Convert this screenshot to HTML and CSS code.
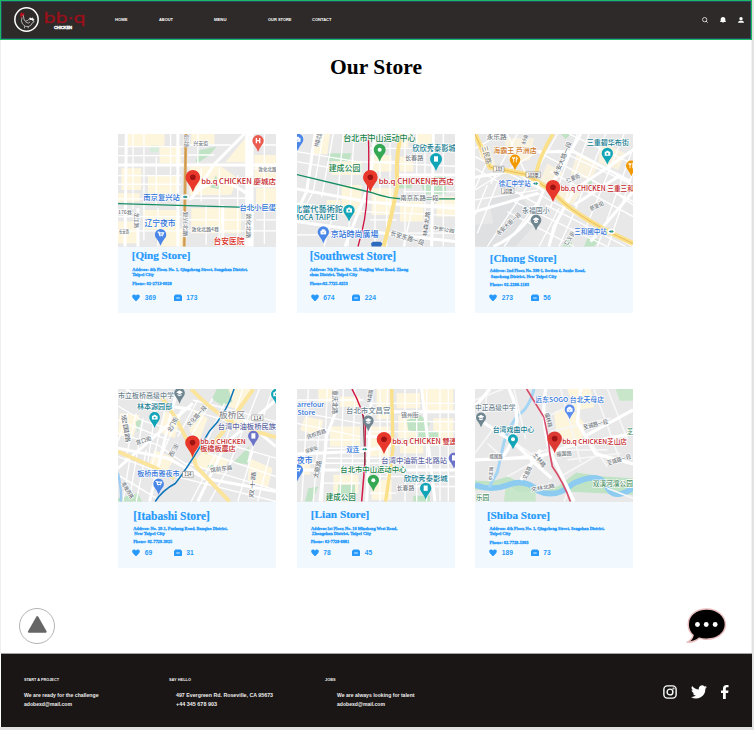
FILE: index.html
```html
<!DOCTYPE html>
<html lang="en">
<head>
<meta charset="utf-8">
<title>bb.q Chicken - Our Store</title>
<link rel="stylesheet" href="styles.css">
</head>
<body>
<div class="page">
  <header class="topbar">
    <div class="logo">
      <svg class="logo-mark" viewBox="0 0 74 74">
        <circle cx="37" cy="37" r="34.5" fill="#2e2a29" stroke="#fff" stroke-width="4.5"/>
        <path d="M17 23l5-8 3 4 5-2 1 5-5 5-4 1 2 5-4-1-1-6z" fill="#b5101d"/>
        <path d="M27 24c3 8 1 14 6 18l8-2 7-8 4 5 6-2-2 6 4 2-6 4-3 6-8 5-10-1-8-7-3-9 2-10M31 57v6M42 57v6M34 44l8 4 6-4" fill="none" stroke="#ddd" stroke-width="2.2"/>
        <path d="M47 31l4 3 4-4 1 6 5 1-5 4-5-3-5 1z" fill="#fff"/>
      </svg>
      <div class="logo-text">
        <svg class="logo-word" viewBox="0 0 41 18"><text x="-.5" y="15.7" textLength="42" lengthAdjust="spacingAndGlyphs">bb·q</text></svg>
        <span class="logo-sub"><span data-w="18">CHICKEN</span></span>
      </div>
    </div>
    <nav class="nav">
      <a><span data-w="12.5">HOME</span></a><a><span data-w="14">ABOUT</span></a><a><span data-w="12.5">MENU</span></a><a><span data-w="23.5">OUR STORE</span></a><a><span data-w="19.5">CONTACT</span></a>
    </nav>
    <div class="tools">
      <svg viewBox="0 0 18 18"><circle cx="8" cy="8" r="6.5" fill="none" stroke="#eee" stroke-width="2.4"/><path d="M12 12l5 5" stroke="#eee" stroke-width="2.6"/></svg>
      <svg viewBox="0 0 18 18"><path d="M9 0c5 0 7 3 7 7v5l2 2v1H0v-1l2-2V7c0-4 2-7 7-7zM6 16h6l-3 2z" fill="#fff"/></svg>
      <svg viewBox="0 0 18 18"><circle cx="9" cy="5" r="5" fill="#fff"/><path d="M0 17c0-5 4-6 9-6s9 1 9 6z" fill="#fff"/></svg>
    </div>
  </header>
  <main>
    <h1><span data-w="92">Our Store</span></h1>
    <section class="stores" id="stores"></section>
    <div class="actions">
      <svg class="up" viewBox="0 0 36 36"><circle cx="18" cy="18" r="17.5" fill="#fff" stroke="#aaa" stroke-width=".9"/><path d="M18.3 9l8.4 14.7H9.9z" fill="#666" stroke="#666" stroke-width="2" stroke-linejoin="round"/></svg>
      <svg class="chat" viewBox="0 0 42 37"><path d="M21.300 1C10.500 1 2.200 7.500 2.200 17c0 5 2 8.500 5 11C6.500 31 4.500 33.500 1.500 35c5 .5 9-1.500 12-4 2.300.7 5 1 7.800 1C32 32 40.400 26 40.400 17S32 1 21.300 1z" fill="#000" stroke="#e9bcbc" stroke-width="1.500"/><g fill="#fff"><circle cx="11.700" cy="17" r="2.500"/><circle cx="20.700" cy="17" r="2.500"/><circle cx="29.900" cy="17" r="2.500"/></g></svg>
    </div>
  </main>
  <footer class="footer">
    <div class="col start">
      <h2><span data-w="35">START A PROJECT</span></h2>
      <p><span data-w="74.500">We are ready for the challenge</span></p><p><span data-w="48">adobexd@mail.com</span></p>
    </div>
    <div class="col hello">
      <h2><span data-w="22">SAY HELLO</span></h2>
      <p><span data-w="97">497 Evergreen Rd. Roseville, CA 95673</span></p><p><span data-w="41">+44 345 678 903</span></p>
    </div>
    <div class="col jobs">
      <h2><span data-w="10.500">JOBS</span></h2>
      <p><span data-w="77.500">We are always looking for talent</span></p><p><span data-w="48">adobexd@mail.com</span></p>
    </div>
    <div class="social">
      <svg class="ig" viewBox="0 0 24 24" fill="none" stroke="#fff" stroke-width="2.400"><rect x="1.500" y="1.500" width="21" height="21" rx="6"/><circle cx="12" cy="12" r="5"/><circle cx="18" cy="6" r=".6"/></svg>
      <svg class="tw" viewBox="0 0 24 20" fill="#fff"><path d="M24 2.400a10 10 0 0 1-2.800.8A5 5 0 0 0 23.300.500a10 10 0 0 1-3.100 1.200A4.900 4.900 0 0 0 11.800 6.200 14 14 0 0 1 1.700 1a4.900 4.900 0 0 0 1.500 6.600 5 5 0 0 1-2.200-.6c0 2.400 1.600 4.400 3.900 4.900a5 5 0 0 1-2.200.1 4.900 4.900 0 0 0 4.600 3.400A9.900 9.900 0 0 1 0 17.500 14 14 0 0 0 21.500 5z"/></svg>
      <svg class="fb" viewBox="0 0 8 14" fill="#fff"><path d="M2 14V8H0V5.400h2V3.500C2 1.200 3.300 0 5.500 0H7.500v2.300H6.200C5 2.300 4.800 2.900 4.800 3.700v1.700h2.700L7.100 8H4.800v6z"/></svg>
    </div>
  </footer>
</div>
<script src="stores.js"></script>
</body>
</html>
```
FILE: styles.css
```css
* { box-sizing: border-box; margin: 0; padding: 0; }
body { width: 754px; height: 730px; overflow: hidden; background: #e3e2e3; font-family: "Liberation Sans", "Noto Sans CJK TC", sans-serif; }
svg { display: block; }
.page { width: 752px; height: 727px; background: #fff; display: flex; flex-direction: column; border-right: 1px solid #f2f2f2; }
[data-w] { display: inline-block; white-space: nowrap; }

.topbar { width: 752px; height: 40px; flex: none; background: #2e2a29; border: 1px solid #1bb865; box-shadow: inset 0 0 0 1px #274660; display: flex; align-items: center; padding: 0 7px 0 13px; }
.logo { display: flex; width: 101px; height: 26px; }
.logo-mark { width: 25px; height: 25px; }
.logo-text { margin-left: 5px; height: 26px; }
.logo-word { width: 41px; height: 18px; overflow: visible; }
.logo-word text { font: 14px "DejaVu Sans", sans-serif; fill: #97101b; stroke: #97101b; stroke-width: .4px; }
.logo-sub { display: block; margin: -1px 0 0 10px; color: #fff; font: bold 5px/6px "Liberation Sans", sans-serif; -webkit-text-stroke: .3px #fff; }
.nav { display: grid; grid-template-columns: 44px 55px 54px 44px 60px; font-size: 4.2px; line-height: 8px; font-weight: bold; color: #fff; }
.tools { margin-left: auto; display: flex; gap: 12px; }
.tools svg { width: 6px; height: 6px; }

main { flex: 1; border-left: 1px solid #efefef; }
h1 { height: 94px; padding: 11px 0 0 329px; font: bold 22px/32px "Liberation Serif", serif; color: #000; }
.stores { display: grid; grid-template-columns: repeat(3, 158px); column-gap: 20.500px; row-gap: 76px; padding-left: 117.200px; }
.card { height: 179px; background: #f1f9ff; color: #2699fb; }
.map { width: 158px; height: 112.500px; }
.map text { font-family: "Noto Sans CJK SC", sans-serif; font-weight: 500; paint-order: stroke; stroke: #fff; stroke-width: 4px; stroke-linejoin: round; }
.info { height: 66px; display: flex; flex-direction: column; padding-left: 14px; }
.name { font: bold 12px/14px "Liberation Serif", serif; height: 14px; -webkit-text-stroke: .2px #2699fb; }
.addr, .phone { font: bold 4.400px/5px "Liberation Serif", serif; height: 5px; -webkit-text-stroke: .3px #2699fb; }
.stats { margin-top: auto; height: 8px; margin-bottom: 11px; display: grid; grid-template-columns: 12.500px 29px 12.500px auto; align-items: center; font: bold 6.500px/8px "Liberation Sans", sans-serif; }
.stats svg { width: 8px; height: 7.500px; }

.actions { display: flex; justify-content: space-between; padding: 40px 24px 0 18px; }
.up { width: 36px; height: 36px; }
.chat { width: 41px; height: 36px; }

.footer { width: 751px; height: 74px; margin-left: 1px; flex: none; background: #1a1615; border-top: 1px solid #a5a3a3; display: flex; padding: 22px 23px 0; color: #eee; font-weight: bold; }
.footer h2 { font-size: 4.200px; line-height: 8px; height: 15px; }
.footer p { font-size: 5.400px; line-height: 9.300px; height: 9.300px; }
.start { width: 145px; }
.hello { width: 156px; }
.hello p { padding-left: 7px; }
.jobs { width: 180px; }
.jobs p { padding-left: 12px; }
.social { margin-left: auto; padding-top: 9px; display: flex; }
.ig { width: 14px; height: 14px; }
.tw { width: 16px; height: 14px; margin-left: 14px; }
.fb { width: 8px; height: 14px; margin-left: 14px; }
```
FILE: stores.js
```js
const W = '#fff', Y = '#fbe08a', CREAM = '#fdf5dc', PARK = '#bfe3c4', RED = '#c5221f';
const BLUE = '#2f72d8', TEAL = '#12a5b8', GREEN = '#34a853', SLATE = '#6f8590', GRAY = '#757b82';

const line = (d, w = 6, c = W) => `<path d="${d}" fill="none" stroke="${c}" stroke-width="${w}"/>`;
const area = (d, c = CREAM) => `<path d="${d}z" fill="${c}"/>`;
const label = (s, x, y, len, c = GRAY, size = 18, rot = 0) =>
  `<text x="${x}" y="${y}" font-size="${size}" textLength="${len}" lengthAdjust="spacingAndGlyphs" fill="${c}"${rot ? ` transform="rotate(${rot} ${x} ${y})"` : ''}>${s}</text>`;
const glyphs = {
  dot: '<circle r="6" fill="#fff"/>',
  cart: '<path d="M-9-7h4l2 9h9l3-7h-13M-2 6h1M6 6h1" fill="none" stroke="#fff" stroke-width="3.5"/>',
  cam: '<path d="M-8-5h4l2-3h5l2 3h4V7H-8z" fill="#fff"/><circle r="3" cy="1" fill="#12a5b8"/>',
  fork: '<path d="M-4-8v16M4-8v16M-7-8v5h6v-5M4-8c5 3 4 8 0 8" fill="none" stroke="#fff" stroke-width="2.500"/>',
  cap: '<path d="M-10-2l10-6 10 6L0 4zM-6 3v4c4 3 8 3 12 0V3L0 6z" fill="#fff"/>',
  box: '<path d="M-6-8H6V8H-6z" fill="#fff"/>',
  bag: '<path d="M-8-3H8V7H-8zM-4-3v-4h8v4" fill="#fff" stroke="#fff"/><path d="M-3 1q3 4 6 0" fill="none" stroke="#5b8def" stroke-width="2"/>',
  H: '<path d="M-5-8V8M5-8V8M-5 0H5" stroke="#fff" stroke-width="4"/>',
  main: '<circle r="8.500" fill="#a01313"/>'
};
const pin = (x, y, r, c, g) =>
  `<path d="M${x} ${y + r * 2}Q${x - r * .2} ${y + r * 1.4} ${x - r * .75} ${y + r * .68}A${r} ${r} 0 1 1 ${x + r * .75} ${y + r * .68}Q${x + r * .2} ${y + r * 1.4} ${x} ${y + r * 2}z" fill="${c}"/><g transform="translate(${x} ${y})">${glyphs[g]}</g>`;
const home = (x, y) => pin(x, y, 22, '#e8382c', 'main');
const station = (x, y) => `<ellipse cx="${x}" cy="${y}" rx="12" ry="8" fill="#fff"/><path d="M${x - 8} ${y}l7-4v8zM${x + 8} ${y}l-7-4v8z" fill="#1b7fb5"/><circle cx="${x + 2}" cy="${y}" r="3" fill="#34a853"/>`;
const tag = (s, x, y, w) => `<path d="M${x} ${y}h${w}v17h-${w}z" fill="#fff" stroke="#777" stroke-width="1.500"/><text x="${x + 5}" y="${y + 14}" font-size="14" textLength="${w - 10}" lengthAdjust="spacingAndGlyphs" fill="#555" style="stroke:none">${s}</text>`;

/* Map drawings share one coordinate space: three units to a pixel. */
const maps = [
  { box: '25 27 475 338', art:
    area('M55 27h110v38H55zM150 65h65v50H150zM35 130h60v65H35zM115 150h90v60H115zM245 27h70v30h-70zM390 60l28-33v85h-70zM240 125h95l50 35-20 50H240zM25 205h65v25H25zM100 255h110v60H100zM245 250h150v75H245zM25 290h60v65H25zM435 90h65v95h-65zM440 190h60v55h-60zM150 310h70v55h-70z') +
    area('M258 110l12-35 50-10-20 25-32 22zM302 188l18-38 10 42z', PARK) + area('M122 62h25v20h-25z', '#d5edda') +
    line('M25 65h200M25 92h200M25 152h190M25 178h190M70 27v225M103 27v320M140 95v150M183 27v190M25 222h190M25 275h190M25 318h475M235 285h180M265 27v90M235 60h130M235 90h80M275 130v100M330 130v230M235 220h190M290 240v120M385 150v210M435 60h65M435 130h65M435 185h65M465 27v330M145 250v115M440 285h60', 4) +
    line('M25 120h475M50 27l-4 338M205 27v338M405 27l-90 90-70 105M240 225q80-100 180-12M340 240v125M85 250v115', 9) +
    line('M420 27v338', 25) + line('M229 27l-5 338', 9, '#dfad62') + line('M229 27l-5 338', 2, '#bd8942') +
    line('M25 236l475 14', 4, '#168d62') +
    label('复兴北路', 227, 30, 36, GRAY, 15, 90) + label('兴安街', 251, 60, 45, GRAY, 14) + label('敦化北路', 447, 137, 55, GRAY, 15) +
    label('176巷', 25, 268, 42, GRAY, 14) + label('龙江路', 76, 262, 48, GRAY, 15, 90) + label('复兴北路', 224, 260, 75, GRAY, 15, 90) + label('敦化北路', 414, 265, 75, GRAY, 15, 90) + label('敦化北路4巷', 246, 318, 82, GRAY, 15) + label('长安路', 28, 325, 30, GRAY, 13) +
    label('南京复兴站', 101, 225, 110, BLUE, 22) + station(227, 216) + label('辽宁夜市', 105, 304, 93, BLUE, 23) + label('台北小巨蛋', 390, 256, 109, BLUE, 22) + label('台安医院', 312, 357, 93, '#d93025', 24) +
    pin(153, 329, 17, '#4a86e8', 'cart') + pin(446, 47, 17, '#ea5b50', 'H') + home(250, 157) + label('bb.q CHICKEN 慶城店', 275, 176, 225, RED, 21) },
  { box: '21 27 474 338', art:
    area('M75 27h45l-8 60H62zM125 110h90v40h-90zM155 180h60v90h-60zM240 90h65v50h-65zM245 190h65v80h-65zM330 95h40v45h-40zM330 230h70v60h-70zM380 27h45v40h-45zM440 215h55v60h-55zM110 225h42v30h-42zM325 27h30v40h-30z') +
    area('M115 85h70l-8 23h-65zM385 160h70v48h-50zM320 175h45v15h-45zM430 150h38v56h-30z', PARK) +
    line('M21 80l180 30 294 14M21 110l190 35M100 27L70 200l-49 90M130 27l-35 190M160 27l-18 200-40 138M192 27l-18 338M21 235l200 25 274 12M240 70h255M240 110h80M270 27v180M300 27v220M345 27v338M380 27v120M405 60v230M460 27v338M330 175h165M340 200h155M330 240h165M240 285h80M255 210v155M290 210v155M21 330h200M370 240l-30 125M220 325h275', 4) +
    line('M75 27L50 200l-29 60M255 27l-12 120M21 192l220 40 254 18M430 27l-5 338M21 290q200 30 474 60M315 150h180M245 160l-80 205', 9) +
    line('M333 27q-18 80-10 150-16 90-42 188', 12, Y) + line('M21 149l220 53q60 22 110 20h144', 4, '#168d62') + line('M235 27q4 120-4 180-1 70-27 158', 4, '#cf123f') +
    label('林森北路', 85, 67, 45, GRAY, 18, -75) + label('长春路', 345, 106, 55, GRAY, 17) + label('南京东路一段', 331, 226, 115, GRAY, 17) + label('长安东路一段', 300, 330, 105, GRAY, 20, 18) + label('林森北路', 410, 335, 75, GRAY, 17, -82) + label('中安公园', 428, 313, 65, GRAY, 14, 10) +
    label('台北市中山运动中心', 160, 48, 217, '#188348', 23) + label('建成公园', 116, 137, 95, '#188348', 24) + label('欣欣秀泰影城', 367, 77, 130, '#147d91', 24) + label('北當代藝術館', 12, 261, 147, '#147d91', 24) + label('MoCA TAIPEI', 9, 284, 134, '#147d91', 22) + label('京站時尚廣場', 122, 336, 143, BLUE, 25) +
    pin(269, 74, 18, GREEN, 'dot') + pin(438, 102, 18, TEAL, 'box') + pin(177, 256, 17, TEAL, 'cam') + pin(100, 321, 17, '#4a86e8', 'bag') + pin(23, 43, 17, '#4a86e8', 'bag') + area('M243 356l6-5 22 0 6 5-4 9h-28', '#2d69bd') +
    home(241, 157) + label('bb.q CHICKEN南西店', 266, 177, 226, RED, 21) },
  { box: '23 27 474 338', art:
    area('M30 55l35 10 20 55-45-18zM110 40h90l-12 65-60 10zM240 115l50 30-40 40-30-20zM330 80l65 40-25 45-60-18zM400 50l75 35-22 50-60-22zM270 180l70 25-25 35-60-28z', '#f9f2df') +
    area('M23 300l60-5 30 70H23zM65 225l80-30 70 90-70 80H90z', '#dfe0e2') + area('M360 340l35 5-15 20h-30zM290 350l20-10 5 25h-28zM280 27h30l-15 15zM358 170l18-12-5 25z', PARK) +
    line('M23 95l190 95M23 70l80-43M23 195l180-110M60 180l-37 90M90 175l-60 150M23 225l190-30M120 27l70 150M150 27l-80 150M270 27l-80 140M330 27l-80 220M210 80l287 150M270 75l227 105M305 27l192 90M365 27L245 365M415 27L305 300M470 27L345 335M497 70L390 365M497 140l-75 225M140 230l280 135M210 205l287 160M120 260l200 105M180 185L60 365M220 220L110 365M275 250l-60 115M23 130l190 110M250 140l247 135M235 240l240 125M330 240l-55 125M440 200l57 40M60 110l-37 80', 4) +
    line('M23 157l120-20 85 60q-40 120-150 168M340 27l-80 140M497 75l-177 120-60 110-15 60M210 80h110l170 90M320 240l140-90M23 260l190-55M497 200L370 350', 9) +
    line('M23 27l45 100 110 22 77 50q55 70 242 157', 15, Y) + line('M23 27l45 100 110 22 77 50q55 70 242 157', 1.5, '#d59a2e') + line('M257 27q-35 55-52 120', 11, Y) +
    label('三民路', 43, 65, 55, '#8f8a73', 22, 75) + label('永乐路', 58, 41, 60, GRAY, 17) + label('永安大路一段', 270, 155, 110, GRAY, 18, -67) + label('仁爱街', 300, 174, 43, GRAY, 17, -23) + label('永安大街一段', 94, 333, 92, GRAY, 18, -42) + label('慈爱街', 370, 258, 45, GRAY, 17, -24) + label('仁义街', 300, 363, 45, GRAY, 18, -58) + label('永乐路', 172, 60, 30, GRAY, 15, -70) +
    tag('103', 79, 124, 31) + tag('103甲', 176, 141, 43) + tag('103甲', 103, 189, 37) +
    label('海霸王 芦洲店', 78, 84, 130, '#ce7625', 22) + label('三重碧华布街', 358, 61, 127, '#147d91', 22) + label('徐汇中学站', 94, 184, 96, BLUE, 21) + station(205, 176) + label('永福国小', 164, 263, 83, SLATE, 22) + label('三和國中站', 321, 326, 97, BLUE, 21) + station(432, 320) +
    pin(143, 104, 16, '#f29900', 'fork') + pin(420, 85, 17, TEAL, 'cam') + pin(492, 122, 16, '#f29900', 'fork') + pin(206, 285, 16, SLATE, 'cap') + home(257, 187) + label('bb.q CHICKEN 三重三和店', 280, 199, 240, RED, 21) },
  { box: '25 27 475 338', art:
    area('M30 100l60 5-20 70-45-10zM165 95l50 10-20 70-50-20zM255 90l40 25-25 65-30-25zM335 27h90l-30 65-60-20zM280 210l80 30-30 45-80-30zM420 235l70 30-15 60-60-20zM135 210l60 25-25 45-55-20zM360 120h60v30h-60z') +
    area('M322 27h35l12 38-30 12-32-20zM372 248l48-50-5 55zM25 355l60-15 12 25H25zM295 255h30v10h-30zM78 125l20-8-15 40z', PARK) +
    line('M25 78l75 45 110 32M25 160l120 35 180 125M55 100l-30 85M80 100L45 250M100 115l-40 240M140 75l-25 170M170 75l-45 190M25 120l150 60M220 80l-70 160M265 60l-60 110M25 230l160 60M60 240l-20 125M110 210l-30 155M250 60l250 65M245 90l255 80M310 55l-80 140M345 70l-55 120M400 27l-55 165M450 27l-90 225M490 27l-75 220M310 180l190 55M280 215l220 75M320 220l-75 145M370 240l-70 125M430 215l-45 150M480 230l-35 135M200 290l300 75M230 250l270 80M25 285l115 70', 4) +
    line('M50 27q40 45 195 60M25 205l150 30 110 60 215 40M25 265l225-195M200 40l-80 325M500 60L350 190 265 365M380 100l120 100', 9) +
    line('M245 27q50 55 135 110l120 35M25 215l115 50 55 30M155 50q80 110 105 210l100 105M287 220l50-60 95-133', 12, '#fbe49c') + line('M25 280q12 50 8 85', 7, '#9ecbf2') +
    line('M374 27q-22 73-75 128-65 110-102 156-38 20-60 54', 4.500, '#0d75ba') +
    label('文化路一段', 240, 142, 78, GRAY, 18, -48) + label('北门街', 184, 158, 48, GRAY, 18, -62) + label('西门街', 188, 232, 42, GRAY, 18, -60) + label('宫口街', 81, 195, 48, GRAY, 17, -18) + label('宏国路', 35, 105, 85, GRAY, 18, 80) + label('南雅西路', 35, 310, 55, GRAY, 16, 60) + label('馆前东路', 303, 277, 67, GRAY, 17, -7) + label('双十路', 432, 355, 80, GRAY, 17, -85) +
    label('市立板桥高级中学', 25, 55, 168, SLATE, 21) + label('林本源园邸', 82, 88, 106, '#147d91', 21) + label('板桥区', 329, 113, 78, '#8e9093', 23) + label('台湾中油板桥民族', 325, 148, 175, '#6268a5', 22) + tag('114', 427, 105, 34) + tag('114', 219, 275, 32) + label('板桥南雅夜市', 83, 289, 127, BLUE, 21) +
    pin(210, 39, 16, SLATE, 'cap') + pin(135, 112, 16, TEAL, 'cam') + pin(432, 168, 16, '#6b73c9', 'box') + pin(147, 312, 16, '#4a86e8', 'cart') + pin(500, 42, 15, TEAL, 'cam') + home(249, 188) + label('bb.q CHICKEN', 272, 193, 137, RED, 20) + label('板橋板農店', 272, 214, 107, RED, 20) },
  { box: '21 27 474 338', art:
    area('M85 27h45v40H85zM150 50h60v30h-60zM260 27h38v90h-38zM320 40h70v45h-70zM325 105h55v70h-55zM400 27h90v70h-90zM240 140h60v90h-60zM45 110l55 10-10 50-60-20zM120 140h90v60h-90zM130 285h75v55h-75zM330 180h70v40h-70zM430 115h60v80h-60zM245 300h60v60h-60zM21 240h40v45H21z') +
    area('M350 120l40-15 30 25-15 30-50-8zM145 315h50v35h-50zM55 325l30-5-20 45H45zM385 155h60v18h-60zM370 348h50v17h-50z', PARK) +
    line('M21 60h200M21 95l190 35M21 130l190 40M55 27L35 365M90 120L70 365M112 27l-15 338M160 27l-10 338M195 27l-12 338M21 180h190M21 250h474M110 205h110M110 235h385M270 27v338M292 27v338M240 70h255M240 125h255M240 155h255M345 27v338M380 27v338M410 27v338M450 27v338M475 27v338M320 195h175M240 290h255M320 320h175M100 310h110M240 340h80', 4) +
    line('M137 27v70l-27 70-20 198M21 222l200-8 100-22M220 95h275M225 170h60M395 27l40 338M21 270h474M245 27l-15 338', 9) +
    line('M305 27l4 180-22 158', 10, Y) + line('M186 27q32 60 40 110l-2 120-9 108', 4.500, '#d41643') + line('M219 105l6 150', 3, '#6f4752') +
    label('重庆北路', 130, 30, 72, GRAY, 17, 90) + label('民权西路', 53, 178, 60, GRAY, 16, -20) + label('保安街', 48, 220, 38, GRAY, 15, -18) + label('太原路', 83, 297, 55, GRAY, 19, -78) + label('锦州街', 333, 110, 53, GRAY, 17) + label('林森路', 242, 69, 40, GRAY, 16, -80) + label('长春路', 320, 330, 53, GRAY, 17) +
    label('Carrefour', 8, 81, 94, BLUE, 19) + label('Store', 22, 104, 54, BLUE, 19) + label('台北市文昌宫', 168, 100, 133, SLATE, 22) + label('双连', 169, 216, 39, BLUE, 20) + station(224, 208) + label('台湾中油新生北路站', 274, 250, 197, '#6268a5', 21) + label('夜市', 21, 249, 46, BLUE, 23) + label('台北市中山运动中心', 151, 276, 198, '#188348', 22) + label('欣欣秀泰影城', 341, 302, 132, '#147d91', 22) + label('建成公园', 107, 361, 90, '#188348', 23) +
    pin(235, 122, 16, SLATE, 'cap') + pin(250, 301, 17, GREEN, 'dot') + pin(407, 325, 17, TEAL, 'box') + pin(492, 234, 16, '#6b73c9', 'box') + pin(22, 270, 17, '#4a86e8', 'cart') + home(282, 178) + label('bb.q CHICKEN 雙連店', 307, 192, 215, RED, 21) },
  { box: '23 27 474 338', art:
    area('M260 95l50-15 45 55-15 60-70-10zM300 27l70 0 10 55-60 10z') + area('M23 330h60l40-12 30 20 140-3 204 10v-50l-90-5-80-12-55 42-80 5-70-35-50 15-72-5z', PARK) + area('M445 27h52v35h-40zM115 318l40 17h50v30H110z', '#c8e6ca') +
    line('M23 315q50 20 100 0t90 18q50 25 105-22 80-38 100 8t79 5', 17, '#8dccf0') + line('M200 27q-15 60-50 80-30 45-40 80l-20 90-25 45', 9, '#a5d5f4') +
    line('M23 220l60-80M60 190l55 50M120 240l120-30M100 160l90 60M140 27l35 150M60 27l-10 90M23 60l85-33M250 105l120-60M250 155l180-40M280 27l60 220M380 27l80 220M420 27l60 150M270 210h150M300 240l160-20M330 130l90 130M280 290l120-70M120 290l110-60M300 340l-10 25M420 325l77 30', 5, '#f7f7f7') +
    line('M23 240l180-8 45-12 50-20 199-40M23 110l120 80 60 60 50 45M125 27q55 110-20 205M235 27q-15 75 10 180l75 158M340 27l-10 100 55 95 112 30M160 300l60-90M23 80l45-53M497 90L350 170', 10) +
    line('M178 27l52 85 13 65q2 40 12 83 35 50 54 105', 5, '#d94c68') +
    label('福林路', 232, 100, 45, GRAY, 17, 75) + label('士林路', 195, 225, 50, GRAY, 18, 50) + label('文昌路', 177, 300, 40, GRAY, 18, -65) + label('福国路', 267, 230, 47, GRAY, 17, -5) + label('至诚路一段', 349, 149, 77, GRAY, 18, -14) + label('至诚路一段', 421, 256, 74, GRAY, 18, -16) + label('文林北路', 192, 335, 72, GRAY, 16, -10) + label('福国路', 66, 235, 40, GRAY, 15) + label('中正路', 75, 302, 42, GRAY, 14, -88) +
    label('远东SOGO 台北天母店', 204, 66, 206, BLUE, 20) + label('中正高级中学', 23, 91, 122, SLATE, 21) + label('台湾戏曲中心', 76, 157, 125, '#147d91', 21) + label('双溪河濱公园', 376, 319, 121, '#4f9469', 21) + label('芝', 479, 162, 18, '#4f9469', 20) + label('乐园', 25, 360, 41, '#4f9469', 21) +
    pin(307, 88, 15, '#5b8def', 'bag') + pin(41, 112, 15, SLATE, 'cap') + pin(137, 178, 15, TEAL, 'dot') + home(262, 176).replace('#e8382c', '#dc3a33') + label('bb.q CHICKEN芝山店', 285, 192, 194, RED, 20) }
];

/* Each text is [string, width, left offset, top gap]. */
const stores = [
  { name: ['[Qing Store]', 58.7, -.5, 1], a: ['Address: 4th Floor, No. 1, Qingcheng Street, Songshan District,', 115.5, 0, 5.5], b: ['Taipei City', 21.5, 0, 0], tel: ['Phone: 02-2713-0928', 39.5, 0, 3.5], likes: 369, notes: 173 },
  { name: ['[Southwest Store]', 86.5, -1, 2], a: ['Address: 7th Floor, No. 15, Nanjing West Road, Zhong', 98.500, -1, 4], b: ['shan District, Taipei City', 47.500, -1, 0], tel: ['Phone:02-7725-0253', 38, -1, 4], likes: 674, notes: 224 },
  { name: ['[Chong Store]', 67, .5, 4], a: ['Address: 2nd Floor, No. 398-1, Section 4, Sanhe Road,', 95.500, .5, 3], b: ['Sanchong District, New Taipei City', 65.700, 1.5, 1], tel: ['Phone: 02-2288-1183', 39.300, .5, 3], likes: 273, notes: 56 },
  { name: ['[Itabashi Store]', 76.700, 1, 7], a: ['Address: No. 29-1, Fushang Road, Banqiao District,', 94.300, 1, 3], b: ['New Taipei City', 30.500, 2, 0], tel: ['Phone: 02-7729-3925', 39, 1, 3], likes: 69, notes: 31 },
  { name: ['[Lian Store]', 58.500, 0, 5], a: ['Address:1st Floor, No. 10 Minsheng West Road,', 86.300, .3, 5], b: ['Zhongshan District, Taipei City', 59.300, 1, 0], tel: ['Phone: 02-7728-8881', 38.500, 0, 3], likes: 78, notes: 45 },
  { name: ['[Shiba Store]', 63, -2.3, 6], a: ['Address: 4th Floor, No. 1, Qingcheng Street, Songshan District,', 115, .3, 4], b: ['Taipei City', 21, .3, 0], tel: ['Phone: 02-7728-5903', 39, .3, 4], likes: 189, notes: 73 }
];
const row = (cls, [s, w, x, gap]) => `<p class="${cls}" style="margin:${gap}px 0 0 ${x}px"><span data-w="${w}">${s}</span></p>`;
const count = n => `<span><span data-w="${String(n).length * 3.75}">${n}</span></span>`;
document.getElementById('stores').innerHTML = stores.map((s, i) => `<article class="card">
  <svg class="map" viewBox="${maps[i].box}" preserveAspectRatio="none"><rect x="20" y="20" width="490" height="350" fill="#e8e8e9"/>${maps[i].art}</svg>
  <div class="info">${row('name', s.name)}${row('addr', s.a)}${row('addr', s.b)}${row('phone', s.tel)}
  <div class="stats"><svg viewBox="0 0 16 15" fill="#2699fb"><path d="M8 15L1.500 8C-1 4 1 .8 4 .8c2 0 3 1 4 2.300C9 1.800 10 .8 12 .8c3 0 5 3.200 2.500 7.200z"/></svg>${count(s.likes)}
  <svg viewBox="0 0 16 15"><path d="M3 1h10l3 3v8q0 3-3 3H3q-3 0-3-3V4z" fill="#2699fb"/><path d="M4.500 7h7v2h-7z" fill="#e5f4ff"/></svg>${count(s.notes)}</div></div>
</article>`).join('');

/* Track each label so that it fills its design width. */
document.querySelectorAll('[data-w]').forEach(el => {
  const natural = el.getBoundingClientRect().width, n = el.textContent.length;
  const size = parseFloat(getComputedStyle(el).fontSize);
  const scale = Math.min(1.15, Math.max(.85, el.dataset.w / natural));
  el.style.fontSize = size * scale + 'px';
  const now = el.getBoundingClientRect().width;
  el.style.letterSpacing = (el.dataset.w - now) / n + 'px';
});
```
